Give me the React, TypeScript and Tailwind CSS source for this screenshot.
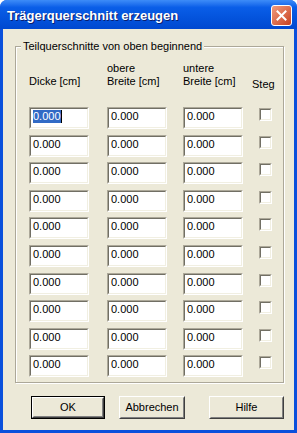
const rows = Array.from({ length: 10 }, (_, i) => i);

function Field({ selected }: { selected?: boolean }) {
  return (
    <div className="h-[22px] w-[60px] border border-t-[#aca899] border-l-[#aca899] border-r-white border-b-white">
      <div className="h-full border border-t-[#716f64] border-l-[#716f64] border-r-[#f1efe2] border-b-[#f1efe2] bg-white pl-[2px] pt-[1px] leading-[13px]">
        {selected ? (
          <span className="inline-flex items-stretch">
            <span className="bg-[#316ac5] text-white">0.000</span>
            <span className="w-px bg-black" />
          </span>
        ) : (
          "0.000"
        )}
      </div>
    </div>
  );
}

function Check() {
  return (
    <div className="mt-[1px] h-[13px] w-[13px] border border-t-[#aca899] border-l-[#aca899] border-r-white border-b-white">
      <div className="h-full border border-t-[#716f64] border-l-[#716f64] border-r-[#f1efe2] border-b-[#f1efe2] bg-white" />
    </div>
  );
}

function Button({ label, width, isDefault }: { label: string; width: string; isDefault?: boolean }) {
  const face = (
    <div className="h-full border border-t-white border-l-white border-r-[#404040] border-b-[#404040]">
      <div className="flex h-full items-center justify-center border border-transparent border-r-[#808080] border-b-[#808080] bg-[#ece9d8] leading-[13px]">
        {label}
      </div>
    </div>
  );
  return (
    <div className={`h-[23px] ${width} ${isDefault ? "border border-black" : ""}`}>
      {face}
    </div>
  );
}

export default function App() {
  return (
    <div
      className="flex h-[433px] w-[297px] flex-col overflow-hidden rounded-t-[7px] bg-[#0a50dc] text-[11px] text-black"
      style={{ fontFamily: '"Liberation Sans", Arial, sans-serif' }}
    >
      {/* title bar */}
      <div className="flex h-[29px] shrink-0 items-center justify-between bg-linear-to-b from-[#3d8cf8] from-0% via-[#0a5ee8] via-25% to-[#0048d0] to-100% pl-[7px] pr-[5px] pt-[2px]">
        <span className="text-[13px] font-bold text-white [text-shadow:1px_1px_0_#0a1e6e]">
          Trägerquerschnitt erzeugen
        </span>
        <div className="flex h-[21px] w-[21px] items-center justify-center rounded-[3px] border border-white bg-linear-to-br from-[#f09a7c] to-[#c8401c]">
          <svg width="11" height="11" viewBox="0 0 11 11">
            <path d="M1.5 1.5 L9.5 9.5 M9.5 1.5 L1.5 9.5" stroke="white" strokeWidth="2" strokeLinecap="square" />
          </svg>
        </div>
      </div>

      {/* dialog body */}
      <div className="mx-[3px] mb-[3px] flex flex-1 flex-col bg-[#ece9d8]">
        <div className="relative ml-[12px] mt-[17px] h-[337px] w-[269px] border border-[#aca899] pl-[13px] pt-[15px] shadow-[inset_1px_1px_0_#fff,1px_1px_0_#fff]">
          <span className="absolute left-[5px] top-[-7px] bg-[#ece9d8] px-[2px] leading-[13px]">
            Teilquerschnitte von oben beginnend
          </span>

          <div className="grid grid-cols-[78px_76px_76px_auto] leading-[13px]">
            <div className="pt-[13px]">Dicke [cm]</div>
            <div>
              obere
              <br />
              Breite [cm]
            </div>
            <div>
              untere
              <br />
              Breite [cm]
            </div>
            <div className="ml-[-7px] pt-[16px]">Steg</div>
          </div>

          <div className="mt-[16px] flex flex-col gap-[5.6px]">
            {rows.map((i) => (
              <div key={i} className="grid grid-cols-[78px_76px_76px_auto] items-start">
                <Field selected={i === 0} />
                <Field />
                <Field />
                <Check />
              </div>
            ))}
          </div>
        </div>

        <div className="mt-[13px] flex pl-[28px]">
          <Button label="OK" width="w-[74px]" isDefault />
          <div className="ml-[14px]">
            <Button label="Abbrechen" width="w-[66px]" />
          </div>
          <div className="ml-[24px]">
            <Button label="Hilfe" width="w-[75px]" />
          </div>
        </div>
      </div>
    </div>
  );
}
